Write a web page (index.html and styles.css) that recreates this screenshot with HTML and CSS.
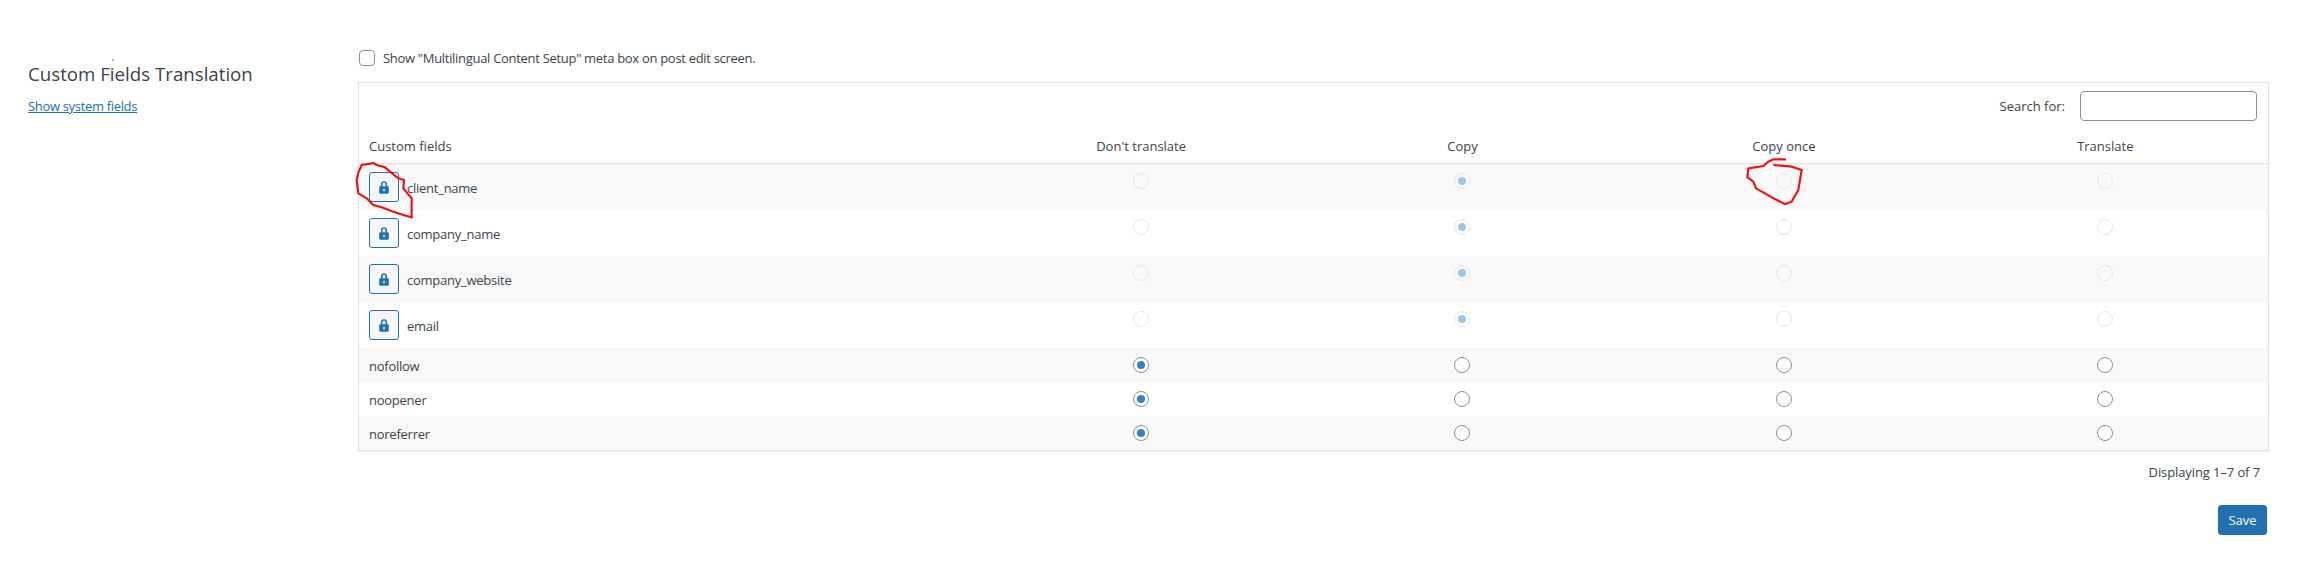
FILE: index.html
```html
<!DOCTYPE html>
<html lang="en">
<head>
    <meta charset="UTF-8">
    <title>Custom Fields Translation</title>
    <link rel="stylesheet" href="styles.css">
</head>
<body>
    <div class="page">
        <div class="side">
            <h2 class="side-title">Custom Fields Translation</h2>
            <a href="#" class="side-link">Show system fields</a>
        </div>

        <div class="main">
            <label class="meta-option">
                <input type="checkbox" class="check">
                Show "Multilingual Content Setup" meta box on post edit screen.
            </label>

            <table class="fields">
                <colgroup>
                    <col class="col-name">
                    <col class="col-option">
                    <col class="col-option">
                    <col class="col-option">
                    <col class="col-option">
                </colgroup>
                <thead>
                    <tr>
                        <td colspan="5" class="search-cell">
                            <label class="search">Search for: <input type="text" class="search-input"></label>
                        </td>
                    </tr>
                    <tr class="head-row">
                        <th class="name-head">Custom fields</th>
                        <th>Don't translate</th>
                        <th>Copy</th>
                        <th>Copy once</th>
                        <th>Translate</th>
                    </tr>
                </thead>
                <tbody>
                    <tr>
                        <td><div class="locked"><button class="lock-btn"><svg class="lock-icon" viewBox="0 0 10 13"><path d="M1.9 5.2V3.400C1.900 1.500 3.200.3 5 .3s3.100 1.200 3.100 3.100v1.800h.6c.7 0 1.100.4 1.100 1.100v5.300c0 .7-.4 1.100-1.100 1.100H1.300c-.7 0-1.100-.4-1.100-1.100V6.300c0-.7.4-1.100 1.100-1.100zm1.600 0h3V3.400C6.500 2.400 5.900 1.800 5 1.800s-1.500.6-1.500 1.600zM4.300 7.800v2.400h1.400V7.800z" fill-rule="evenodd"/></svg></button><span class="field-name">client_name</span></div></td>
                        <td><input type="radio" class="radio" name="f1" disabled></td>
                        <td><input type="radio" class="radio" name="f1" disabled checked></td>
                        <td><input type="radio" class="radio" name="f1" disabled></td>
                        <td><input type="radio" class="radio" name="f1" disabled></td>
                    </tr>
                    <tr>
                        <td><div class="locked"><button class="lock-btn"><svg class="lock-icon" viewBox="0 0 10 13"><path d="M1.9 5.2V3.400C1.900 1.500 3.200.3 5 .3s3.100 1.200 3.100 3.100v1.800h.6c.7 0 1.100.4 1.100 1.100v5.300c0 .7-.4 1.100-1.100 1.100H1.300c-.7 0-1.100-.4-1.100-1.100V6.300c0-.7.4-1.100 1.100-1.100zm1.600 0h3V3.400C6.500 2.400 5.900 1.800 5 1.800s-1.500.6-1.500 1.600zM4.300 7.800v2.400h1.400V7.800z" fill-rule="evenodd"/></svg></button><span class="field-name">company_name</span></div></td>
                        <td><input type="radio" class="radio" name="f2" disabled></td>
                        <td><input type="radio" class="radio" name="f2" disabled checked></td>
                        <td><input type="radio" class="radio" name="f2" disabled></td>
                        <td><input type="radio" class="radio" name="f2" disabled></td>
                    </tr>
                    <tr>
                        <td><div class="locked"><button class="lock-btn"><svg class="lock-icon" viewBox="0 0 10 13"><path d="M1.9 5.2V3.400C1.900 1.500 3.200.3 5 .3s3.100 1.200 3.100 3.100v1.800h.6c.7 0 1.100.4 1.100 1.100v5.300c0 .7-.4 1.100-1.100 1.100H1.300c-.7 0-1.100-.4-1.100-1.100V6.300c0-.7.4-1.100 1.100-1.100zm1.600 0h3V3.400C6.500 2.400 5.900 1.800 5 1.800s-1.500.6-1.500 1.600zM4.300 7.800v2.400h1.400V7.800z" fill-rule="evenodd"/></svg></button><span class="field-name">company_website</span></div></td>
                        <td><input type="radio" class="radio" name="f3" disabled></td>
                        <td><input type="radio" class="radio" name="f3" disabled checked></td>
                        <td><input type="radio" class="radio" name="f3" disabled></td>
                        <td><input type="radio" class="radio" name="f3" disabled></td>
                    </tr>
                    <tr>
                        <td><div class="locked"><button class="lock-btn"><svg class="lock-icon" viewBox="0 0 10 13"><path d="M1.9 5.2V3.400C1.900 1.500 3.200.3 5 .3s3.100 1.200 3.100 3.100v1.800h.6c.7 0 1.100.4 1.100 1.100v5.300c0 .7-.4 1.100-1.100 1.100H1.300c-.7 0-1.100-.4-1.100-1.100V6.300c0-.7.4-1.100 1.100-1.100zm1.600 0h3V3.400C6.500 2.400 5.900 1.800 5 1.800s-1.500.6-1.500 1.600zM4.300 7.800v2.400h1.400V7.800z" fill-rule="evenodd"/></svg></button><span class="field-name">email</span></div></td>
                        <td><input type="radio" class="radio" name="f4" disabled></td>
                        <td><input type="radio" class="radio" name="f4" disabled checked></td>
                        <td><input type="radio" class="radio" name="f4" disabled></td>
                        <td><input type="radio" class="radio" name="f4" disabled></td>
                    </tr>
                    <tr>
                        <td class="plain-name">nofollow</td>
                        <td><input type="radio" class="radio" name="f5" checked></td>
                        <td><input type="radio" class="radio" name="f5"></td>
                        <td><input type="radio" class="radio" name="f5"></td>
                        <td><input type="radio" class="radio" name="f5"></td>
                    </tr>
                    <tr>
                        <td class="plain-name">noopener</td>
                        <td><input type="radio" class="radio" name="f6" checked></td>
                        <td><input type="radio" class="radio" name="f6"></td>
                        <td><input type="radio" class="radio" name="f6"></td>
                        <td><input type="radio" class="radio" name="f6"></td>
                    </tr>
                    <tr>
                        <td class="plain-name">noreferrer</td>
                        <td><input type="radio" class="radio" name="f7" checked></td>
                        <td><input type="radio" class="radio" name="f7"></td>
                        <td><input type="radio" class="radio" name="f7"></td>
                        <td><input type="radio" class="radio" name="f7"></td>
                    </tr>
                </tbody>
            </table>

            <div class="count">Displaying 1–7 of 7</div>

            <div class="actions">
                <button class="save-btn">Save</button>
            </div>
        </div>
    </div>

    <!-- red marker scribbles drawn over the screenshot -->
    <svg class="scribbles" viewBox="0 0 2312 569">
        <path d="M113 59.500v1"/>
        <g transform="translate(340 130) scale(.3333)">
            <path d="M97 97L110 105 135 112 150 125 175 145 192 150 190 175 215 205 215 262 190 255 160 245 125 232 100 225 80 205 55 190 50 150 55 128 65 105 97 100"/>
        </g>
        <g transform="translate(1720 130) scale(.3333)">
            <path d="M198 88L160 88 145 95 130 108 85 115 82 142 100 155 108 175 135 190 160 205 195 222 215 215 235 180 245 120 215 110 160 105"/>
        </g>
    </svg>
</body>
</html>
```

FILE: styles.css
```css
* {
    box-sizing: border-box;
}

body {
    position: relative;
    margin: 0;
    min-height: 569px;
    background-color: #ffffff;
    color: #3c434a;
    font-family: "Open Sans", "Noto Sans", sans-serif;
    font-size: 13px;
    line-height: 18px;
}

.page {
    display: flex;
    padding: 49px 43px 0 28px;
}

.side {
    width: 330px;
    flex-shrink: 0;
    padding-top: 13px;
}

.side-title {
    margin: 0 0 11px;
    font-size: 18.7px;
    font-weight: 400;
    line-height: 24px;
}

.side-link {
    color: #2271b1;
    letter-spacing: -0.33px;
}

.main {
    flex: 1;
}

.meta-option {
    display: flex;
    align-items: center;
    gap: 8px;
    height: 18px;
    letter-spacing: -0.3px;
}

.check {
    appearance: none;
    width: 16px;
    height: 16px;
    margin: 0 0 0 1px;
    border: 1px solid #8c8f94;
    border-radius: 4px;
    background-color: #ffffff;
}

.fields {
    width: 100%;
    margin-top: 15px;
    border: 1px solid #e2e2e2;
    border-spacing: 0;
    border-collapse: separate;
    table-layout: fixed;
    box-shadow: 0 1px 1px rgba(0, 0, 0, 0.04);
}

.col-option {
    width: 321.4px;
}

.fields td,
.fields th {
    padding: 8px 14px 8px 10px;
    vertical-align: top;
    text-align: center;
    font-weight: 400;
}

.fields td:first-child,
.fields .name-head {
    padding-right: 10px;
    text-align: left;
}

.fields td.search-cell {
    padding-right: 11px;
    text-align: right;
}

.search {
    display: inline-flex;
    align-items: center;
    gap: 15px;
}

.search-input {
    width: 177px;
    height: 30px;
    padding: 0 8px;
    border: 1px solid #8c8f94;
    border-radius: 4px;
    background-color: #ffffff;
}

.head-row th {
    border-bottom: 1px solid #e2e2e2;
}

.fields tbody tr:nth-child(odd) {
    background-color: #f9f9f9;
}

.fields td.plain-name {
    padding-top: 9px;
    padding-bottom: 7px;
    letter-spacing: -0.25px;
}

.locked {
    display: flex;
    align-items: center;
    gap: 8px;
}

.field-name {
    padding-top: 2px;
    letter-spacing: -0.25px;
}

.lock-btn {
    display: flex;
    align-items: center;
    justify-content: center;
    width: 30px;
    height: 30px;
    padding: 0;
    border: 1px solid #2271b1;
    border-radius: 3px;
    background-color: #f6f7f7;
}

.lock-icon {
    width: 10px;
    height: 13px;
    fill: #2271b1;
}

.radio {
    appearance: none;
    display: inline-flex;
    align-items: center;
    justify-content: center;
    width: 16px;
    height: 16px;
    margin: 1px 0;
    border: 1px solid #8c8f94;
    border-radius: 50%;
    background-color: #ffffff;
    vertical-align: top;
}

.radio:checked::before {
    content: "";
    width: 8px;
    height: 8px;
    border-radius: 50%;
    background-color: #3582c4;
}

.radio:disabled {
    border-color: #e6e6e6;
    background-color: transparent;
}

.radio:disabled:checked::before {
    background-color: #a0c5e4;
}

.count {
    margin-top: 12px;
    padding-right: 9px;
    text-align: right;
    letter-spacing: -0.1px;
}

.actions {
    display: flex;
    justify-content: flex-end;
    margin-top: 24px;
    padding-right: 2px;
}

.save-btn {
    width: 49px;
    height: 30px;
    padding: 0;
    border: 1px solid #2271b1;
    border-radius: 3px;
    background-color: #2271b1;
    color: #ffffff;
    font-family: inherit;
    font-size: 13px;
}

.scribbles {
    position: absolute;
    top: 0;
    left: 0;
    width: 2312px;
    height: 569px;
    fill: none;
    stroke: #f01010;
    stroke-width: 1.6;
    pointer-events: none;
}

.scribbles g path {
    stroke-width: 6.5;
}
```
